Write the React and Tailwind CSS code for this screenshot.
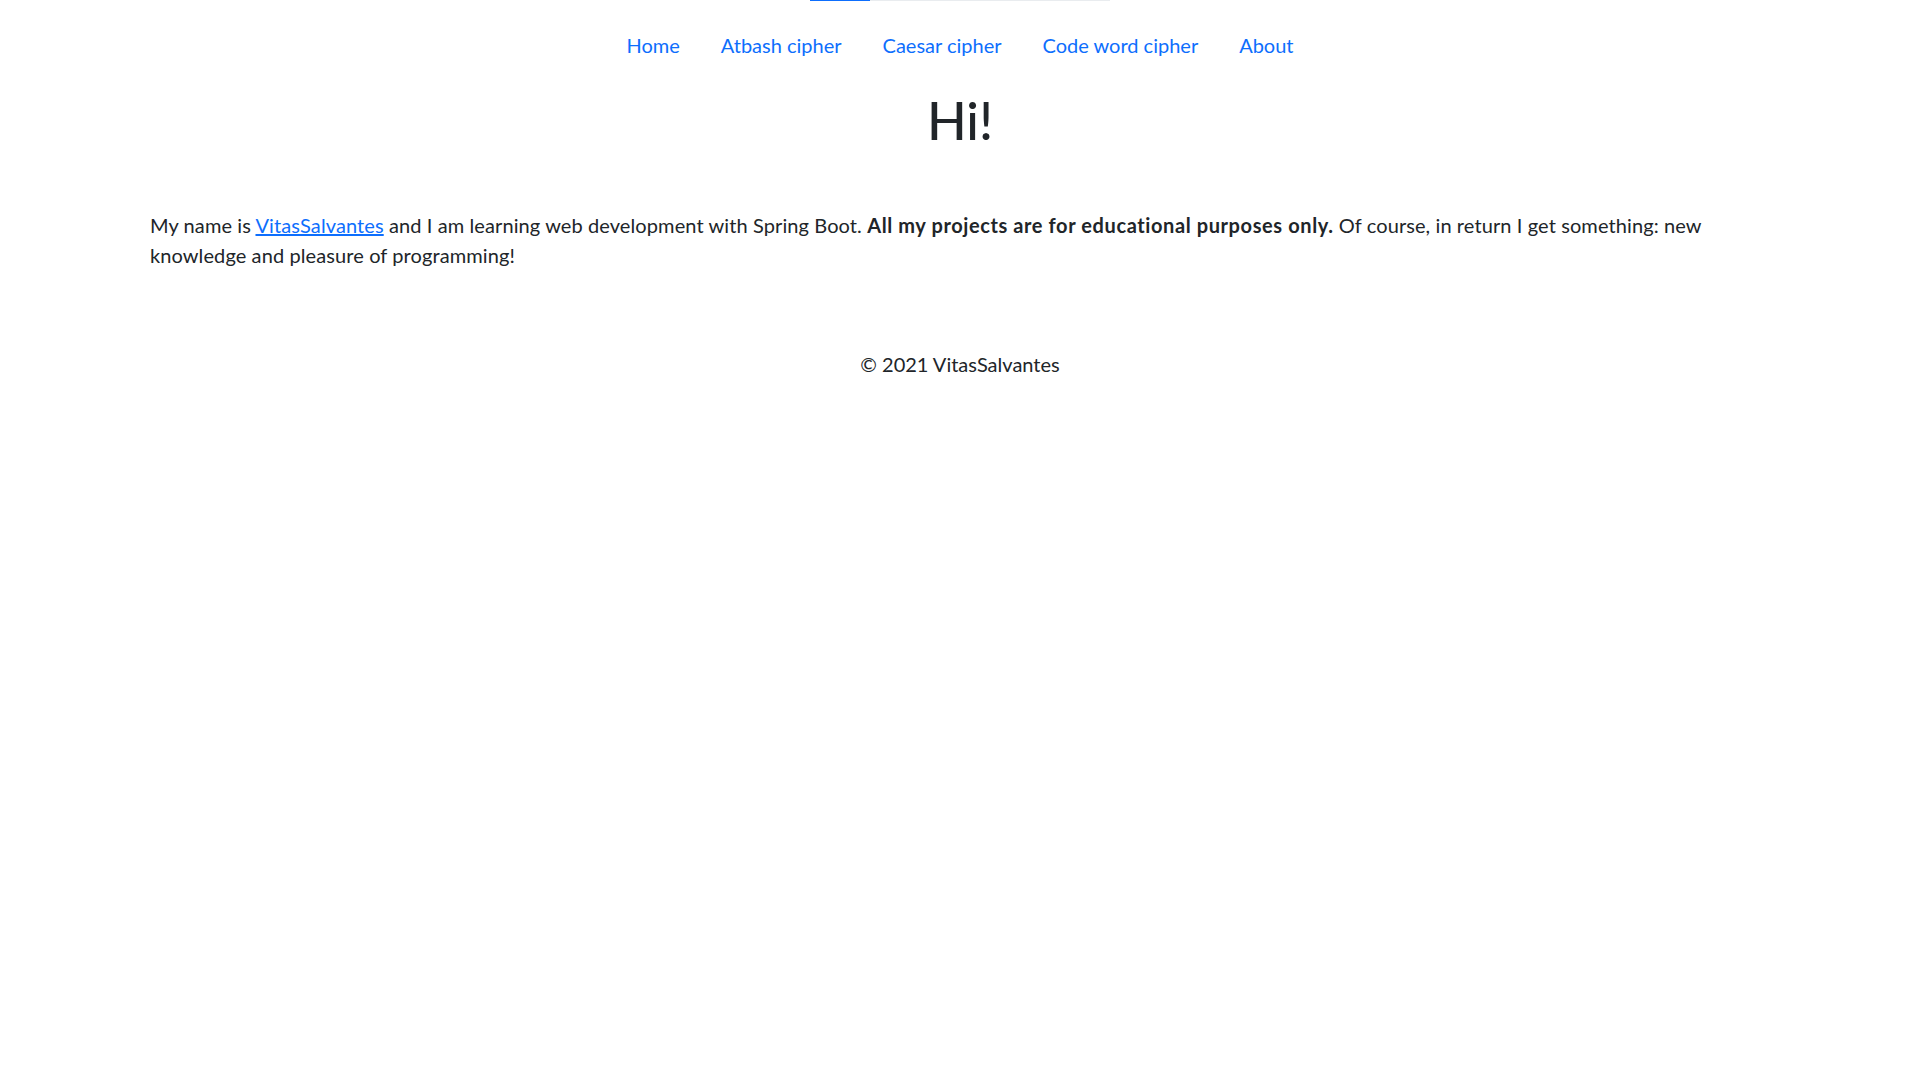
export default function App() {
  const font = { fontFamily: 'Lato, "Open Sans", sans-serif' };
  return (
    <div className="min-h-screen bg-white text-[#212529]" style={font}>
      <div className="flex justify-center">
        <div className="w-[300px] h-px bg-[#e9ecef]">
          <div className="w-[60px] h-px bg-[#0d6efd]"></div>
        </div>
      </div>
      <nav className="mt-[29px] flex justify-center gap-[41px] text-[20px] leading-[30px]">
        <a href="#" className="text-[#0d6efd]">Home</a>
        <a href="#" className="text-[#0d6efd]">Atbash cipher</a>
        <a href="#" className="text-[#0d6efd]">Caesar cipher</a>
        <a href="#" className="text-[#0d6efd]">Code word cipher</a>
        <a href="#" className="text-[#0d6efd]">About</a>
      </nav>
      <h1 className="mt-[29px] text-center text-[52px] leading-[1.2] font-medium">Hi!</h1>
      <p className="mt-[59px] px-[150px] text-[20px] leading-[30px] tracking-[0.1px]">
        My name is{' '}
        <a href="#" className="text-[#0d6efd] underline">VitasSalvantes</a>{' '}
        and I am learning web development with Spring Boot.{' '}
        <b className="font-bold tracking-[0.6px]">All my projects are for educational purposes only.</b>{' '}
        Of course, in return I get something: new knowledge and pleasure of programming!
      </p>
      <footer className="mt-[79px] text-center text-[20px] leading-[30px]">© 2021 VitasSalvantes</footer>
    </div>
  );
}
